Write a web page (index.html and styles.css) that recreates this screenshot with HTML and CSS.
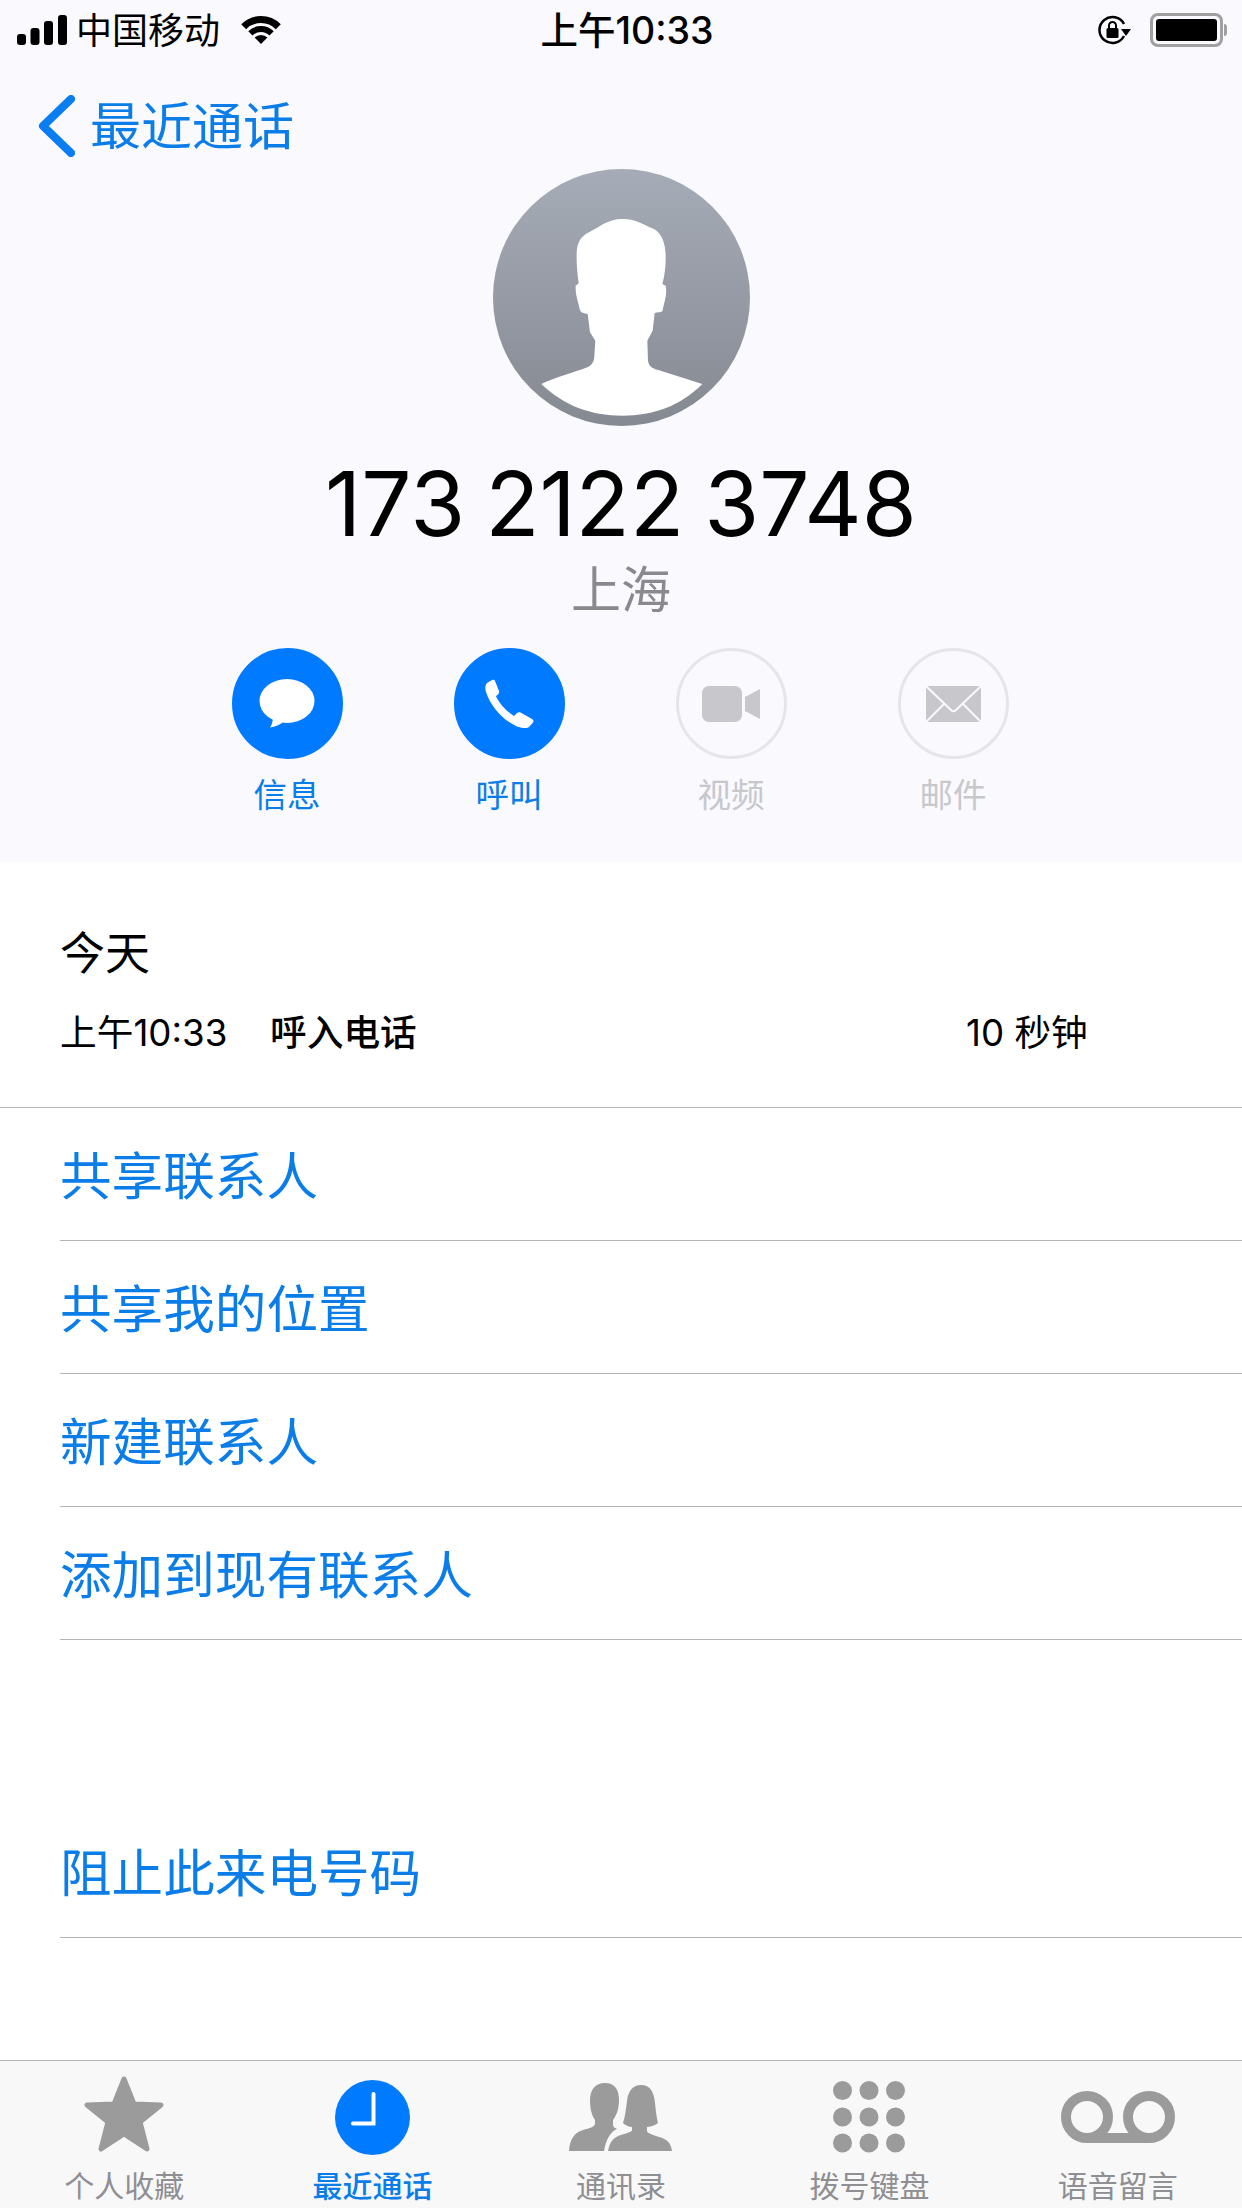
FILE: index.html
```html
<!DOCTYPE html>
<html lang="zh-CN">
  <head>
    <title>最近通话</title>
    <meta charset="utf-8">
    <link rel="stylesheet" href="styles.css">
  </head>
  <body>
    <main class="screen">

      <header class="top">
        <div class="status">
          <div class="status-left">
            <svg class="signal" width="50" height="30" viewBox="0 0 50 30">
              <rect x="0" y="19" width="9" height="11" rx="3"/>
              <rect x="13.5" y="13" width="9" height="17" rx="3"/>
              <rect x="27" y="6" width="9" height="24" rx="3"/>
              <rect x="41" y="0" width="9" height="30" rx="3"/>
            </svg>
            <span class="carrier">中国移动</span>
            <svg class="wifi" width="42" height="28" viewBox="0 0 42 28">
              <path d="M21 28 L14.600 21.600 A9 9 0 0 1 27.400 21.600 Z"/>
              <path d="M10.400 17.400 A15 15 0 0 1 31.600 17.400" fill="none" stroke="#000" stroke-width="6"/>
              <path d="M3.700 10.700 A24.500 24.500 0 0 1 38.300 10.700" fill="none" stroke="#000" stroke-width="7"/>
            </svg>
          </div>
          <div class="clock">上午10:33</div>
          <div class="status-right">
            <svg class="rotation" width="34" height="30" viewBox="0 0 34 30">
              <path d="M27 21 A13 13 0 1 1 27 9" fill="none" stroke="#000" stroke-width="2.500"/>
              <path d="M24 14 L34 14 L29 21 Z"/>
              <rect x="9.500" y="13" width="12" height="10" rx="1.500"/>
              <path d="M12 13 V10.500 A3.500 3.500 0 0 1 19 10.500 V13" fill="none" stroke="#000" stroke-width="2"/>
            </svg>
            <div class="battery"><div class="battery-fill"></div></div>
            <div class="battery-cap"></div>
          </div>
        </div>

        <a class="back">
          <svg width="37" height="62" viewBox="0 0 37 62">
            <path d="M33 4 L5 31 L33 58" fill="none" stroke="#0a7df0" stroke-width="8" stroke-linecap="round" stroke-linejoin="round"/>
          </svg>
          <span>最近通话</span>
        </a>

        <div class="contact">
          <svg class="avatar" width="257" height="257" viewBox="157 55 771 771">
            <defs>
              <linearGradient id="avatar-bg" x1="0" y1="0" x2="0" y2="1">
                <stop offset="0" stop-color="#a6acb7"/>
                <stop offset="1" stop-color="#858992"/>
              </linearGradient>
            </defs>
            <circle cx="542.500" cy="440.500" r="385.500" fill="url(#avatar-bg)"/>
            <path fill="#fff" d="M545 205 C590 205 610 225 640 235 C665 250 675 280 675 320 C675 350 672 375 665 400 L675 405 C680 430 672 450 665 482 C660 486 650 485 642 487 L636 540 L620 570 L622 630 C625 650 640 655 660 660 L785 700 C720 765 640 795 545 795 C450 795 370 765 302 700 C345 680 400 665 440 650 C458 640 460 630 461 615 L464 570 L448 545 L441 490 C430 487 420 488 417 475 C412 450 404 435 405 405 L414 398 C410 370 407 340 408 305 C410 270 425 255 445 245 C475 230 500 205 545 205 Z"/>
          </svg>
          <h1 class="number">173 2122 3748</h1>
          <div class="place">上海</div>
        </div>

        <div class="quick">
          <div class="quick-item">
            <div class="quick-icon on">
              <svg width="56" height="49" viewBox="0 0 56 49">
                <ellipse cx="28" cy="22" rx="27.500" ry="22" fill="#fff"/>
                <path d="M14 36 C14 42 13 46 11 48.500 C16 48 21 46 25 42 Z" fill="#fff"/>
              </svg>
            </div>
            <span class="quick-label on">信息</span>
          </div>
          <div class="quick-item">
            <div class="quick-icon on">
              <svg width="49" height="49" viewBox="0 0 49 49">
                <path fill="#fff" d="M2 4 L7 1 C8.500 .3 9.500 .8 10 2 L14 12 C14.500 13.500 14 14.500 13 15.500 L11 17 C13 23 22 33 29 37 L32 34 C33 33 34.500 33 35.500 33.500 L47 40 C48.500 41 49 42 48 43.500 L44 48 C41 50 36 49 31 47 C18 41 6 28 1 13 C0 10 0 6 2 4Z"/>
              </svg>
            </div>
            <span class="quick-label on">呼叫</span>
          </div>
          <div class="quick-item">
            <div class="quick-icon">
              <svg width="58" height="36" viewBox="0 0 58 36">
                <rect x="0" y="0" width="40" height="36" rx="7" fill="#c7c7cc"/>
                <path d="M43 11 L58 3 V33 L43 25 Z" fill="#c7c7cc"/>
              </svg>
            </div>
            <span class="quick-label">视频</span>
          </div>
          <div class="quick-item">
            <div class="quick-icon">
              <svg width="55" height="36" viewBox="0 0 55 36">
                <rect width="55" height="36" fill="#c7c7cc"/>
                <path d="M0 0 L25 24 C26.500 25.500 28.500 25.500 30 24 L55 0 M0 36 L19 17 M55 36 L36 17" fill="none" stroke="#f9f9fe" stroke-width="2"/>
              </svg>
            </div>
            <span class="quick-label">邮件</span>
          </div>
        </div>
      </header>

      <section class="recent">
        <div class="recent-day">今天</div>
        <div class="recent-call">
          <span class="recent-time">上午10:33</span>
          <span class="recent-type">呼入电话</span>
          <span class="recent-length">10 秒钟</span>
        </div>
      </section>

      <section class="actions">
        <a class="action">共享联系人</a>
        <a class="action">共享我的位置</a>
        <a class="action">新建联系人</a>
        <a class="action">添加到现有联系人</a>
      </section>

      <section class="actions block">
        <a class="action">阻止此来电号码</a>
      </section>

      <nav class="tabs">
        <a class="tab">
          <div class="tab-icon">
            <svg class="tab-star" width="80" height="77" viewBox="0 0 80 77">
              <path fill="#9b9b9b" stroke="#9b9b9b" stroke-width="5" stroke-linejoin="round" d="M40 3 L50 28 L77 29 L56 46 L63 73 L40 58 L17 73 L24 46 L3 29 L30 28 Z"/>
            </svg>
          </div>
          <span>个人收藏</span>
        </a>
        <a class="tab active">
          <div class="tab-icon">
            <svg width="75" height="75" viewBox="0 0 75 75">
              <circle cx="37.500" cy="37.500" r="37.500" fill="#007aff"/>
              <path d="M38.500 14 V43.500 H18" fill="none" stroke="#fff" stroke-width="4" stroke-linecap="round"/>
            </svg>
          </div>
          <span>最近通话</span>
        </a>
        <a class="tab">
          <div class="tab-icon">
            <svg width="103" height="68" viewBox="0 0 103 68">
              <path fill="#9b9b9b" d="M36 0 C46 0 50 7 50 17 C50 27 47 33 44 37 L44 42 C44 44 46 45 48 46 C41 49 37 57 35 68 L0 68 C1 56 5 50 14 47 C21 45 25 44 26 41 L26 37 C23 33 21 26 21 17 C21 7 26 0 36 0Z"/>
              <path fill="#9b9b9b" d="M72 2 C82 2 85 10 86 20 C87 30 88 37 89 40 C85 43 80 44 78 44 L78 48 C78 50 84 52 90 54 C98 56 102 60 103 68 L39 68 C41 58 45 54 52 52 C58 50 63 49 63 47 L63 44 C60 44 56 42 54 40 C56 34 57 26 58 18 C59 9 63 2 72 2Z"/>
            </svg>
          </div>
          <span>通讯录</span>
        </a>
        <a class="tab">
          <div class="tab-icon">
            <svg width="72" height="72" viewBox="0 0 72 72" fill="#9b9b9b">
              <circle cx="9.500" cy="9.500" r="9.500"/><circle cx="36" cy="9.500" r="9.500"/><circle cx="62.500" cy="9.500" r="9.500"/>
              <circle cx="9.500" cy="36" r="9.500"/><circle cx="36" cy="36" r="9.500"/><circle cx="62.500" cy="36" r="9.500"/>
              <circle cx="9.500" cy="62" r="9.500"/><circle cx="36" cy="62" r="9.500"/><circle cx="62.500" cy="62" r="9.500"/>
            </svg>
          </div>
          <span>拨号键盘</span>
        </a>
        <a class="tab">
          <div class="tab-icon">
            <svg width="114" height="52" viewBox="0 0 114 52">
              <circle cx="26" cy="26" r="21" fill="none" stroke="#9b9b9b" stroke-width="10"/>
              <circle cx="88" cy="26" r="21" fill="none" stroke="#9b9b9b" stroke-width="10"/>
              <rect x="26" y="42" width="62" height="10" fill="#9b9b9b"/>
            </svg>
          </div>
          <span>语音留言</span>
        </a>
      </nav>

    </main>
  </body>
</html>
```

FILE: styles.css
```css
:root {
  --blue: #0a7de8;
  --line: #b4b4b4;
  --cjk: Inter, "Noto Sans CJK SC", sans-serif;
}

body {
  background-color: white;
  color: black;
  font-family: var(--cjk);
  margin: 0;
}

h1 {
  font-weight: 400;
  margin: 0;
}

.screen {
  display: flex;
  flex-direction: column;
  height: 2208px;
  overflow: hidden;
  width: 1242px;
}

.top {
  background-color: #f9f9fe;
  height: 862px;
}

/* status bar */
.status {
  align-items: center;
  display: grid;
  grid-template-columns: 1fr auto 1fr;
  height: 60px;
}

.status-left {
  align-items: center;
  display: flex;
  padding-left: 17px;
}

.signal {
  margin-right: 9px;
}

.carrier {
  font-size: 36px;
  line-height: 56px;
  margin: 2px 20px 0 0;
}

.clock {
  font-size: 37.5px;
  font-weight: 500;
  line-height: 56px;
  padding: 2px 0 0 12px;
}

.status-right {
  align-items: center;
  display: flex;
  justify-content: flex-end;
  padding-right: 15px;
}

.rotation {
  margin-right: 19px;
}

.battery {
  border: 3px solid #a0a0a0;
  border-radius: 8px;
  box-sizing: border-box;
  height: 34px;
  padding: 3px;
  width: 73px;
}

.battery-fill {
  background-color: black;
  border-radius: 3px;
  height: 100%;
  width: 100%;
}

.battery-cap {
  background-color: #a0a0a0;
  border-radius: 0 3px 3px 0;
  height: 12px;
  margin-left: 1px;
  width: 3px;
}

/* back link */
.back {
  align-items: center;
  color: var(--blue);
  display: flex;
  font-size: 51px;
  gap: 15px;
  height: 62px;
  margin-top: 35px;
  padding-left: 38px;
}

.back span {
  padding-bottom: 6px;
}

/* contact */
.contact {
  align-items: center;
  display: flex;
  flex-direction: column;
  margin-top: 12px;
}

.number {
  font-size: 89px;
  line-height: 100px;
  margin-top: 28px;
  word-spacing: -5px;
}

.place {
  color: #8a8a8e;
  font-size: 50px;
  line-height: 70px;
  margin-top: 1px;
}

.quick {
  display: grid;
  grid-template-columns: repeat(4, 222px);
  justify-content: center;
  margin-top: 23px;
  padding-right: 2px;
}

.quick-item {
  align-items: center;
  display: flex;
  flex-direction: column;
}

.quick-icon {
  align-items: center;
  border: 3px solid #e5e5ea;
  border-radius: 50%;
  box-sizing: border-box;
  display: flex;
  height: 111px;
  justify-content: center;
  width: 111px;
}

.quick-icon.on {
  background-color: #007aff;
  border-color: #007aff;
}

.quick-label {
  color: #c7c7cc;
  font-size: 33.5px;
  line-height: 46px;
  margin-top: 13px;
}

.quick-label.on {
  color: var(--blue);
}

/* recent call */
.recent {
  border-bottom: 1px solid var(--line);
  box-sizing: border-box;
  height: 246px;
  padding: 62px 0 0 60px;
}

.recent-day {
  font-size: 45px;
  line-height: 60px;
}

.recent-call {
  display: flex;
  font-size: 36.7px;
  line-height: 50px;
  margin-top: 24px;
}

.recent-time {
  width: 210px;
}

.recent-type {
  font-weight: 500;
  width: 696px;
}

/* blue rows */
.action {
  align-items: center;
  border-bottom: 1px solid var(--line);
  box-sizing: border-box;
  color: var(--blue);
  display: flex;
  font-size: 51.6px;
  height: 133px;
  margin-left: 60px;
  padding-bottom: 3px;
}

.actions.block {
  margin-top: 165px;
}

/* tab bar */
.tabs {
  background-color: #f8f8f8;
  border-top: 1px solid var(--line);
  box-sizing: border-box;
  display: grid;
  grid-template-columns: repeat(5, 1fr);
  height: 148px;
  margin-top: auto;
}

.tab {
  align-items: center;
  color: #8e8e93;
  display: flex;
  flex-direction: column;
  font-size: 30px;
}

.tab-icon {
  align-items: center;
  display: flex;
  height: 112px;
}

.tab-star {
  margin-bottom: 5px;
}

.tab span {
  line-height: 27px;
}

.tab.active {
  color: var(--blue);
  font-weight: 500;
}
```
